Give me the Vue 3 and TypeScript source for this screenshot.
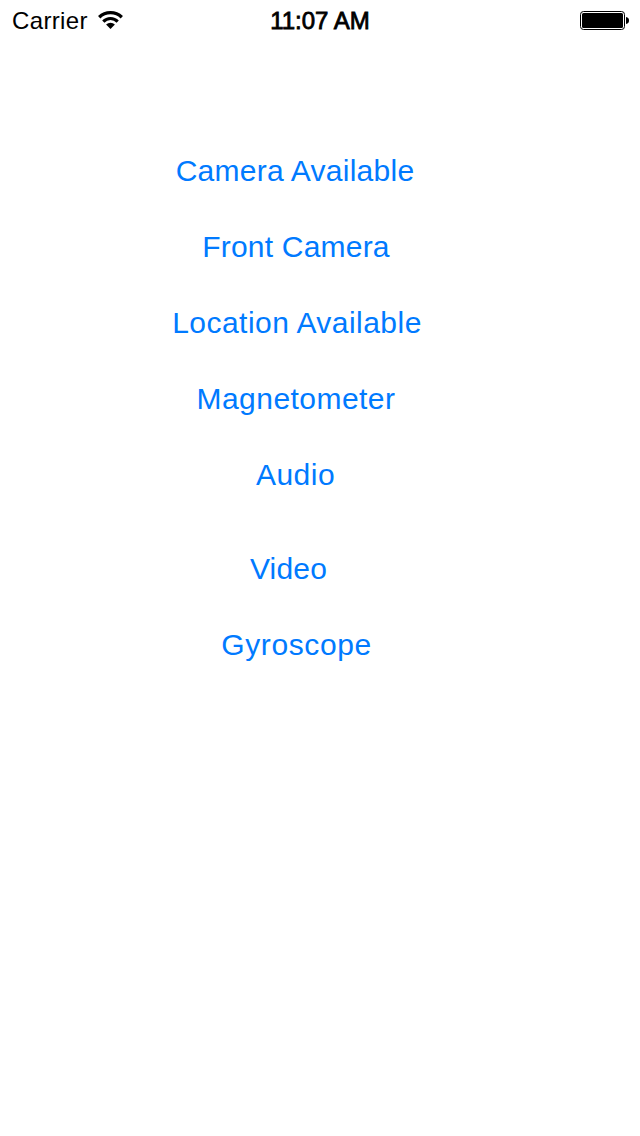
<script setup lang="ts">
interface Action {
  label: string
  kind: string
}

const actions: Action[] = [
  { label: 'Camera Available', kind: 'camera' },
  { label: 'Front Camera', kind: 'front' },
  { label: 'Location Available', kind: 'location' },
  { label: 'Magnetometer', kind: 'magnetometer' },
  { label: 'Audio', kind: 'audio' },
  { label: 'Video', kind: 'video' },
  { label: 'Gyroscope', kind: 'gyroscope' },
]
</script>

<template>
  <div class="screen">
    <header class="status">
      <div class="network">
        <span class="carrier">Carrier</span>
        <svg class="wifi" width="26" height="18" viewBox="0 0 26 18">
          <path d="M1.2 6.3A16.2 16.2 0 0 1 23.8 6.3" fill="none" stroke="#000" stroke-width="3.3" />
          <path d="M5.3 10.6A10 10 0 0 1 19.7 10.6" fill="none" stroke="#000" stroke-width="3.1" />
          <path d="M8.1 13.6A6.2 6.2 0 0 1 16.9 13.6L12.5 18Z" fill="#000" />
        </svg>
      </div>
      <time class="time">11:07 AM</time>
      <div class="power">
        <svg width="50" height="20" viewBox="0 0 50 20">
          <rect x="0.5" y="0.5" width="44" height="18" rx="3" fill="#fff" stroke="#000" />
          <rect x="2" y="2" width="41" height="15" rx="1.5" fill="#000" />
          <path d="M46 6C48.3 6.4 49 7.6 49 9.5S48.3 12.6 46 13Z" fill="#000" />
        </svg>
      </div>
    </header>
    <main class="actions">
      <button v-for="action in actions" :key="action.kind" type="button" class="action" :class="action.kind">
        {{ action.label }}
      </button>
    </main>
  </div>
</template>

<style>
body {
  background: #fff;
}
</style>

<style scoped>
.screen {
  width: 640px;
  height: 1136px;
  overflow: hidden;
  background: #fff;
  font-family: "Liberation Sans", Arial, sans-serif;
}
.status {
  display: grid;
  grid-template-columns: 1fr auto 1fr;
  height: 42px;
  line-height: 42px;
  font-size: 24px;
  color: #000;
}
.network {
  display: flex;
  align-items: flex-start;
  padding-left: 12px;
}
.carrier {
  width: 86px;
  letter-spacing: 0.35px;
  white-space: nowrap;
}
.wifi {
  margin-top: 11px;
}
.time {
  -webkit-text-stroke: 0.8px #000;
}
.power {
  display: flex;
  justify-content: flex-end;
  padding: 11px 10px 0 0;
}
.actions {
  display: flex;
  flex-direction: column;
  align-items: center;
  gap: 36px;
  width: 592px;
  padding-top: 109px;
}
.action {
  height: 40px;
  padding: 0;
  border: 0;
  background: none;
  color: #007aff;
  font: 30px/40px "Liberation Sans", Arial, sans-serif;
  white-space: nowrap;
}
.camera {
  letter-spacing: 0.26px;
  margin-right: 2px;
}
.front {
  letter-spacing: 0.2px;
}
.location {
  letter-spacing: 0.46px;
  margin-left: 2px;
}
.magnetometer {
  letter-spacing: 0.46px;
}
.audio {
  letter-spacing: 0.5px;
  margin-right: 1px;
  margin-bottom: 14px;
}
.video {
  letter-spacing: 0.2px;
  margin-top: 4px;
  margin-right: 15px;
}
.gyroscope {
  letter-spacing: 0.6px;
  margin-left: 1px;
}
</style>
